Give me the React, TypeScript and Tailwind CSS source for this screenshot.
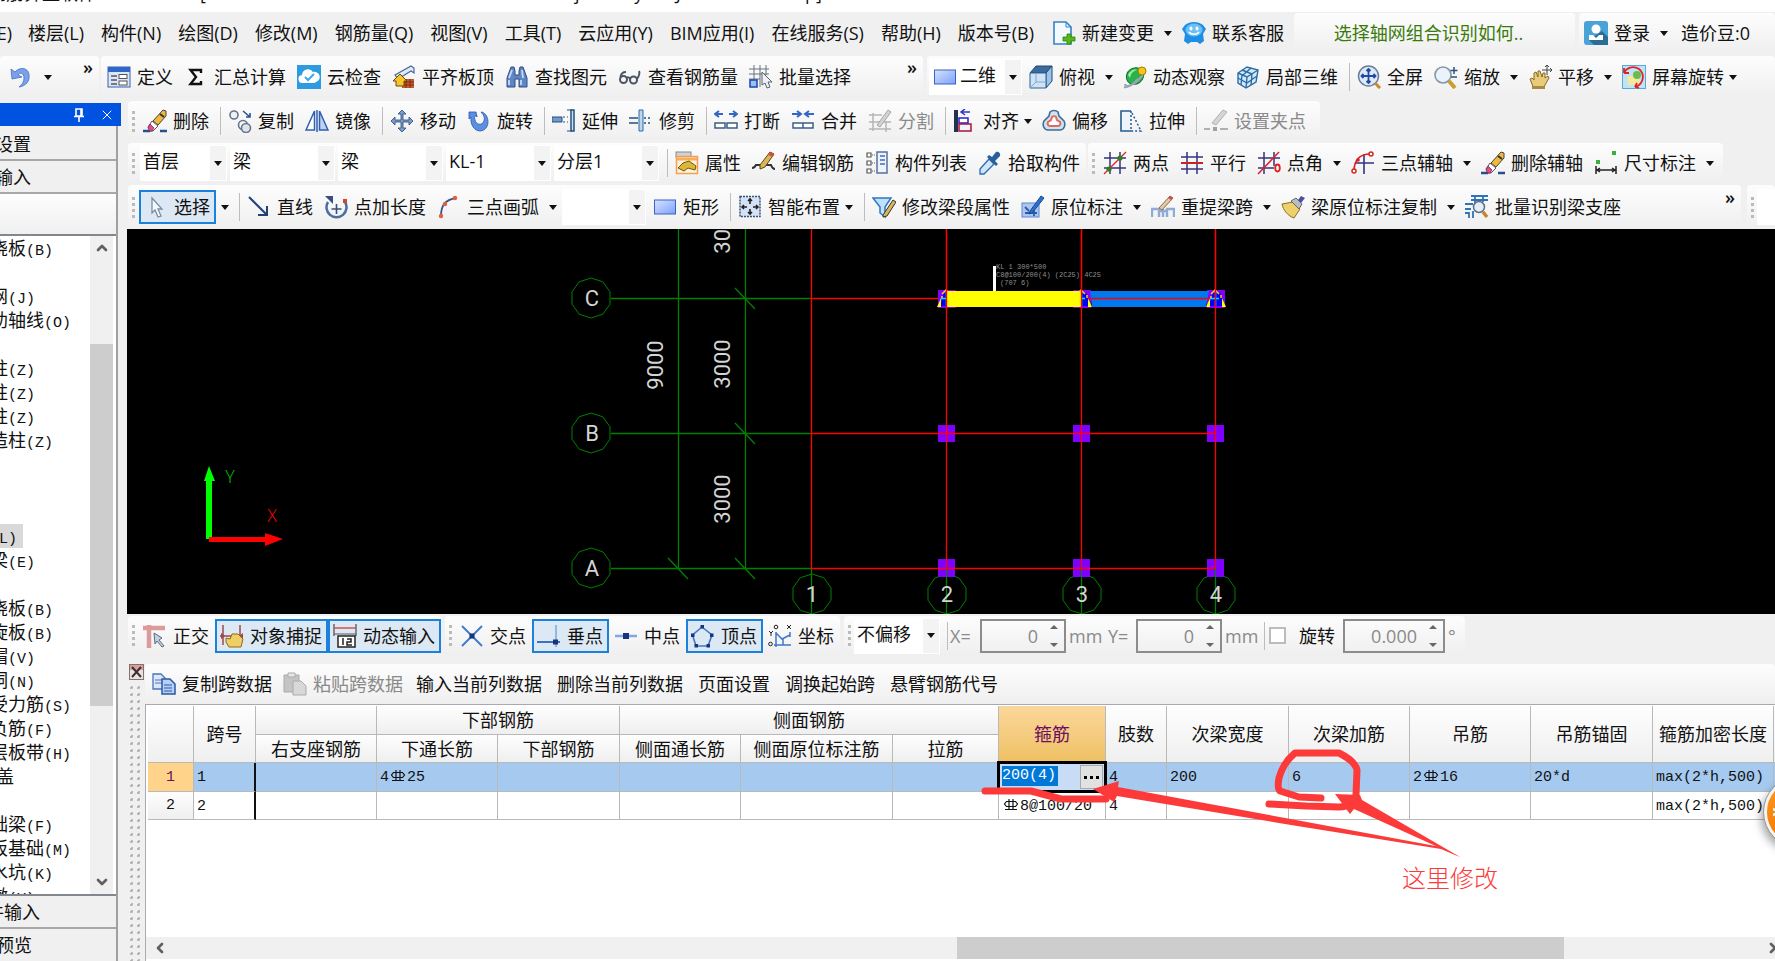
import React from "react";
import { ChevronDown, ChevronLeft, ChevronRight, ChevronUp, X } from "lucide-react";

const icons: Record<string, React.ReactNode> = {
  define: (
    <>
      <rect x="1" y="2" width="22" height="20" fill="#dbe6fa" stroke="#3a62b0" />
      <rect x="1" y="2" width="22" height="5" fill="#2f66c8" />
      <path d="M4 11h6M4 15h6M4 19h6" stroke="#555" strokeWidth="1.5" />
      <rect x="12" y="9.500" width="8" height="4" fill="#fff" stroke="#555" />
      <rect x="12" y="16" width="8" height="4" fill="#fff" stroke="#555" />
    </>
  ),
  sigma: <path d="M17 8V5H6.500L12 12L6.500 19H17V16" fill="none" stroke="#111" strokeWidth="2.400" />,
  cloud: (
    <>
      <rect x="0" y="0" width="24" height="24" fill="#2c9be0" />
      <path d="M6 18a4 4 0 0 1-1-8 6 6 0 0 1 11-3 5 5 0 0 1 3 10c-1 1-2 1-3 1z" fill="#fff" />
      <path d="M8 12l3 3 6-6" fill="none" stroke="#3da8ea" strokeWidth="2" />
    </>
  ),
  slabTop: (
    <>
      <path d="M3 10L19 1l3 2v5l-3-2L6 14z" fill="#dfe9f7" stroke="#44689c" strokeWidth="1.200" />
      <path d="M10 14h12v9H10z" fill="#c65a2e" />
      <path d="M10 17h12M10 20h12M14 14v9M18 14v9" stroke="#7d2c12" />
      <path d="M8 9l7 7h-3v5H4v-5H1z" fill="#f6c52e" stroke="#6b4c00" />
    </>
  ),
  binoculars: (
    <>
      <path d="M6 2h3l1 4v4h4V6l1-4h3l4 11v9h-8v-8h-4v8H2v-9z" fill="#5f86c4" stroke="#2c4c86" />
      <path d="M4 15v5M16 15v5M7 5l-3 8M17 5l1 8" stroke="#c8daf4" strokeWidth="1.800" />
    </>
  ),
  glasses: (
    <g fill="none" stroke="#4b5563" strokeWidth="2">
      <circle cx="5.500" cy="14.500" r="3.500" />
      <circle cx="15.500" cy="15" r="3.500" />
      <path d="M9 13c1-1 2-1 3 1M2.500 12C3 9 5 7 8 7M19 14c2-3 3-6 2-8" />
    </g>
  ),
  batch: (
    <>
      <path d="M0 4h20M0 9h20M0 14h11M5 0v22M11 0v22M17 0v10" stroke="#6b7280" fill="none" />
      <rect x="1" y="15" width="7" height="7" fill="#9bc0f5" stroke="#1746b4" strokeWidth="1.500" />
      <path d="M13 7v13l3-2 2 5 3-1-2-5h4z" fill="#eef1f5" stroke="#5b6470" />
    </>
  ),
  rect: (
    <>
      <defs>
        <linearGradient id="blueBox" x1="0" y1="0" x2="1" y2="1">
          <stop offset="0" stopColor="#d6e4ff" />
          <stop offset="1" stopColor="#7da0fb" />
        </linearGradient>
      </defs>
      <rect x="1.500" y="5" width="21" height="14" fill="url(#blueBox)" stroke="#3a63c0" />
    </>
  ),
  cube: (
    <>
      <path d="M1 8l6-7h16l-6 7z" fill="#3c6a9a" stroke="#1f4a78" />
      <path d="M17 8l6-7v15l-6 7z" fill="#9ec3e4" stroke="#1f4a78" />
      <path d="M1 8h16v15H1z" fill="#cfe3f5" stroke="#2f6299" />
      <path d="M7 8v9h10M7 17l-6 6" stroke="#7da9cf" fill="none" />
    </>
  ),
  orbit: (
    <>
      <ellipse cx="12" cy="11" rx="9" ry="8" fill="#2bb24c" stroke="#10702a" transform="rotate(-35 12 11)" />
      <path d="M5 10c3-6 8-6 9-5-4 1-6 3-7 8z" fill="#9af0a6" />
      <path d="M1 22c3 1 9-2 14-8M2 19c0 4 9 2 18-9" fill="none" stroke="#9aa6b5" strokeWidth="2" />
      <circle cx="19" cy="6" r="4" fill="#f5c518" stroke="#a67c00" />
    </>
  ),
  local3d: (
    <g fill="#d4e8f8" stroke="#2c6ca6" strokeWidth="1.400">
      <path d="M2 8l9-6 11 3-2 12-10 6-8-5z" />
      <path d="M2 8l9 4 11-7M11 12l-1 11M6 5l10 4M6 10l-1 10M16 9l-1 11M7 20M2 13l9 5 10-7M15 3L7 10" fill="none" />
    </g>
  ),
  fullscreen: (
    <>
      <circle cx="11.500" cy="11" r="10" fill="#dfeaf8" stroke="#6b7f9e" strokeWidth="1.500" />
      <path d="M11.500 4v14M4.500 11h14M9.500 6l2-2 2 2M9.500 16l2 2 2-2M6.500 9l-2 2 2 2M16.500 9l2 2-2 2" fill="none" stroke="#2348a0" strokeWidth="1.800" />
      <path d="M18 18l5 5" stroke="#c98a2b" strokeWidth="3" />
    </>
  ),
  zoom: (
    <>
      <circle cx="9" cy="10" r="8" fill="#eaf2fb" stroke="#8896a8" strokeWidth="1.600" />
      <path d="M15 16l6 7" stroke="#c9a02b" strokeWidth="4" />
      <path d="M20 2v7M16.500 5.500h7M17 12h6" stroke="#33507c" strokeWidth="1.500" />
    </>
  ),
  pan: (
    <>
      <path d="M2 14l2-1 2 2V8l2-1 2 5V6l2 0 2 6 1-4 2 0 0 5 3-2 1 2-4 7-2 4H6z" fill="#e9cb7c" stroke="#8a6a1c" />
      <path d="M19 0v10M14 5h10M17 2l2-2 2 2M22 3l2 2-2 2" fill="none" stroke="#444" />
      <path d="M4 21h13v3H4z" fill="#a88a45" />
    </>
  ),
  screenRotate: (
    <>
      <rect x="0.500" y="0.500" width="23" height="23" fill="#bfe3f7" stroke="#59a9d6" />
      <path d="M5 11h10l3 4v5H6z" fill="#f4e7a1" />
      <circle cx="15" cy="10" r="4" fill="#6dbb4a" />
      <path d="M2 8c2-5 9-8 15-4 6 5 5 14-3 18M2 8V3M2 8h5M13 22l4 1M13 22l2-4" fill="none" stroke="#e02424" strokeWidth="1.800" />
    </>
  ),
  erase: (
    <>
      <path d="M0 22h7M17 22h7" stroke="#24508e" strokeWidth="2.500" />
      <path d="M10 12L20 1l3 1v5L15 16z" fill="#f0b93a" stroke="#444" />
      <path d="M17 5l4 3" stroke="#333" strokeWidth="2" />
      <path d="M9 12l6 5-5 5H7l-2-4z" fill="#fff" stroke="#555" />
      <path d="M7 15l4 4-2 3H7l-2-3z" fill="#e34a8c" stroke="#8a2a58" strokeWidth="0.800" />
    </>
  ),
  copy: (
    <>
      <circle cx="6" cy="6" r="4" fill="#eef2f7" stroke="#66758a" strokeWidth="1.600" />
      <circle cx="15" cy="16" r="4.500" fill="none" stroke="#66758a" strokeWidth="1.600" />
      <circle cx="18" cy="19" r="4.500" fill="#dde4ee" stroke="#66758a" strokeWidth="1.600" />
      <path d="M15 2l7 6M22 4v4h-4" fill="none" stroke="#2a5298" strokeWidth="1.600" />
    </>
  ),
  mirror: (
    <g fill="#fff" stroke="#2f5fae" strokeWidth="1.500">
      <path d="M9.500 2v19H1z" />
      <path d="M14.500 2v19H23z" fill="#bcd2f3" />
      <path d="M12 1v22" />
    </g>
  ),
  move: (
    <path d="M12 1l4 4h-3v6h6V8l4 4-4 4v-3h-6v6h3l-4 4-4-4h3v-6H5v3l-4-4 4-4v3h6V5H8z" fill="#7c9cc8" stroke="#24487f" strokeWidth="0.800" />
  ),
  rotate: (
    <path d="M9 3H2v7l2-2c-1 7 3 14 9 14s10-7 7-14c-1-3-4-5-6-5 3 3 4 6 3 9-2 5-8 4-9-1-1-2 0-4 1-5l1 2z" fill="#5d8fe0" stroke="#2a57ad" strokeWidth="0.800" />
  ),
  extend: (
    <>
      <path d="M0 8h10v5H0z" fill="#6f9acb" stroke="#23507f" />
      <path d="M11 8h5M11 13h5" stroke="#23507f" strokeDasharray="2 2" />
      <path d="M19 1h3v21h-3z" fill="#cfe0f2" stroke="#23507f" strokeWidth="1.500" />
      <path d="M15 1h5M15 22h5" stroke="#23507f" />
    </>
  ),
  trim: (
    <>
      <path d="M0 9h9M0 14h9" stroke="#23507f" strokeWidth="1.600" />
      <path d="M15 9h8M15 14h8" stroke="#23507f" strokeDasharray="2 2" strokeWidth="1.600" />
      <path d="M10 1h4v21h-4z" fill="#bcd5ee" stroke="#2e6da6" />
    </>
  ),
  breakLine: (
    <>
      <path d="M9 5H2M5 2L1 5l4 3M15 5h7M19 2l4 3-4 3" fill="none" stroke="#3267c4" strokeWidth="2" />
      <path d="M1 14h10v5H1zM13 14h10v5H13z" fill="#fff" stroke="#3d5d86" strokeWidth="1.500" />
    </>
  ),
  merge: (
    <>
      <path d="M1 5h8M6 2l4 3-4 3M23 5h-8M18 2l-4 3 4 3" fill="none" stroke="#3267c4" strokeWidth="2" />
      <path d="M2 14h20v5H2zM12 14v5" fill="#fff" stroke="#3d5d86" strokeWidth="1.500" />
    </>
  ),
  split: (
    <>
      <path d="M1 6h13M1 20h22M5 4v18M18 12v11M1 13h22" stroke="#b5b5b5" strokeWidth="1.500" fill="none" />
      <path d="M9 16L20 1l3 2L12 18z" fill="#d2d2d2" stroke="#a5a5a5" />
    </>
  ),
  align: (
    <>
      <path d="M3 1v22" stroke="#1f3350" strokeWidth="4" />
      <path d="M17 3H9M12 0L8 3l4 3" fill="none" stroke="#3232c8" strokeWidth="1.500" />
      <path d="M6 9h9v5H6z" fill="#fff" stroke="#2222cc" strokeWidth="1.500" />
      <path d="M6 15h12v7H6z" fill="#f0f4ff" stroke="#b01030" strokeWidth="1.500" />
    </>
  ),
  offset: (
    <>
      <path d="M8 3c2-2 6-2 8 0l1 4 5 5c2 4 0 9-4 9H6c-4 0-6-5-4-9l5-5z" fill="#cfe3f3" stroke="#3d6f97" strokeWidth="1.600" />
      <path d="M10 8c1-1 3-1 4 0l1 3 3 2c1 2 0 4-2 4H8c-2 0-3-2-2-4l3-2z" fill="#fff" stroke="#e06a5e" strokeWidth="2" />
    </>
  ),
  stretch: (
    <>
      <path d="M12 2H2v20h11" fill="#eef4fb" stroke="#2a5a92" strokeWidth="1.600" />
      <path d="M12 2v20M13 4l9 18H13" fill="none" stroke="#2a5a92" strokeDasharray="2 2" strokeWidth="1.500" />
    </>
  ),
  grip: (
    <>
      <path d="M0 20h6M16 20h8" stroke="#b0b0b0" strokeWidth="2" />
      <path d="M9 18h4v4H9z" fill="#a0a0a0" />
      <path d="M8 14L19 1l4 2-11 13z" fill="#d5d5d5" stroke="#b0b0b0" />
    </>
  ),
  property: (
    <>
      <rect x="1" y="1" width="15" height="5" fill="#cfd3d8" stroke="#888" />
      <rect x="1.500" y="5.500" width="21" height="17" fill="#fdf3dd" stroke="#f0a050" strokeWidth="1.500" />
      <path d="M2 8h20" stroke="#f3b060" strokeWidth="3" />
      <path d="M3 17l5-5 6-2 7 5-1 4-7-2-4 3z" fill="#dcb83a" stroke="#71530b" />
    </>
  ),
  editBar: (
    <>
      <path d="M0 17c2 0 3-1 4-3h15c1 3 2 4 4 4" fill="none" stroke="#333" strokeWidth="2" />
      <path d="M8 14L18 1l4 2-9 13-5 2z" fill="#d9b65a" stroke="#5c4712" />
      <path d="M18 1l4 2-1 3-5-2z" fill="#d05050" />
    </>
  ),
  list: (
    <>
      <path d="M2 2h4v4H2zM2 10h4v4H2zM2 18h4v4H2z" fill="#fff" stroke="#555" strokeWidth="1.200" />
      <path d="M7 4h4M7 12h4M7 20h4" stroke="#555" strokeDasharray="1 1" />
      <rect x="12" y="1" width="10" height="21" fill="#eef3fb" stroke="#5470a0" strokeWidth="1.500" />
      <path d="M15 5h5M15 9h5M15 13h5" stroke="#3e6ec0" strokeWidth="1.500" />
    </>
  ),
  dropper: (
    <>
      <path d="M11 8l5 5L6 23H2v-5z" fill="#cfe6fa" stroke="#2a6ab0" strokeWidth="1.300" />
      <path d="M9 6l9 9 2-2-3-3 5-5c1-3-2-5-4-4l-4 5-3-2z" fill="#2a5f9e" />
    </>
  ),
  twoPoint: (
    <>
      <path d="M7 1v22M17 1v22M1 7h22M1 17h22" stroke="#35357c" strokeWidth="1.500" />
      <path d="M1 23L23 1" stroke="#d22" strokeWidth="1.300" />
      <circle cx="17" cy="7" r="2.600" fill="#357a1c" />
      <circle cx="6" cy="18" r="2.600" fill="#357a1c" />
    </>
  ),
  parallel: (
    <>
      <path d="M7 1v22M17 1v22M1 6h22M1 18h22" stroke="#35357c" strokeWidth="1.500" />
      <path d="M1 12h22" stroke="#c22" strokeWidth="2" />
    </>
  ),
  pointAngle: (
    <>
      <path d="M7 1v22M17 1v14M1 7h22M1 17h16" stroke="#35357c" strokeWidth="1.500" />
      <path d="M1 23L22 1" stroke="#d22" strokeWidth="1.500" />
      <ellipse cx="20.500" cy="17" rx="2.300" ry="3.500" fill="none" stroke="#d22" strokeWidth="1.800" />
    </>
  ),
  threePoint: (
    <>
      <path d="M13 3v20M4 12h19" stroke="#35357c" strokeWidth="1.600" />
      <path d="M3 20C3 9 9 3 19 3" fill="none" stroke="#d22" strokeWidth="1.600" />
      <circle cx="3" cy="20" r="2" fill="#fff" stroke="#d22" strokeWidth="1.500" />
      <circle cx="20" cy="3" r="2" fill="#fff" stroke="#d22" strokeWidth="1.500" />
      <circle cx="7" cy="9" r="1.800" fill="#d22" />
    </>
  ),
  dimension: (
    <>
      <path d="M2 15v8M22 15v8M3 19h18M6 17l-3 2 3 2M18 17l3 2-3 2" fill="none" stroke="#222" strokeWidth="1.500" />
      <path d="M2 9h4v4H2zM18 0h4v4h-4z" fill="#3cae3c" />
    </>
  ),
  cursor: <path d="M8 3v15l3-3 3 7 3-1-3-7h4z" fill="#f6f9fd" stroke="#7d8da3" strokeWidth="1.300" />,
  line: <path d="M2 2l18 18M20 11v9h-9" fill="none" stroke="#24407a" strokeWidth="2" />,
  pointLength: (
    <>
      <path d="M4 7a10 10 0 1 0 17 0" fill="none" stroke="#4a6da3" strokeWidth="2.500" />
      <path d="M1 1h8v8z" fill="#34517f" />
      <path d="M12.500 9v10M7.500 14h10" stroke="#34517f" strokeWidth="1.600" />
      <path d="M19 4h4v4h-4z" fill="#d2492a" />
    </>
  ),
  arc: (
    <>
      <path d="M4 21C4 10 8 5 19 3" fill="none" stroke="#35568c" strokeWidth="1.800" />
      <circle cx="4" cy="21" r="2.200" fill="#e2603c" />
      <circle cx="8" cy="9" r="2.200" fill="#e2603c" />
      <circle cx="18" cy="3" r="2.200" fill="#e2603c" />
    </>
  ),
  smart: (
    <>
      <rect x="2" y="1.500" width="20" height="20" fill="#d3e2f4" stroke="#38527a" strokeDasharray="2 1" strokeWidth="1.500" />
      <path d="M12 4v5M10 6l2-2 2 2M12 19v-5M10 17l2 2 2-2M4 12h5M6 10l-2 2 2 2M20 12h-5M18 10l2 2-2 2" fill="none" stroke="#222" strokeWidth="1.600" />
    </>
  ),
  modifySeg: (
    <>
      <path d="M1 3h18l-6 9v10l-5-4v-6z" fill="#bfe0fb" stroke="#2e78c0" strokeWidth="1.500" />
      <path d="M11 20L21 5l3 2-9 14-4 1z" fill="#d9b65a" stroke="#333" />
    </>
  ),
  inSitu: (
    <>
      <rect x="1" y="8" width="17" height="14" fill="#a9c6f4" stroke="#5d88cc" />
      <path d="M4 12l4 4M4 18h12M13 12v9" stroke="#2d5aa8" strokeWidth="1.800" />
      <path d="M9 16L20 1l3 2L12 17l-4 2z" fill="#2f6fd0" stroke="#1b4892" />
    </>
  ),
  respan: (
    <>
      <path d="M1 22v-8h7v8M8 16h8M16 22v-8h7v8M12 14v8" fill="none" stroke="#8fabd6" strokeWidth="2.400" />
      <path d="M8 13L19 1l3 2-11 12z" fill="#e3c9a8" stroke="#8b6c4a" />
      <path d="M19 1l3 2-2 2-3-2z" fill="#c95050" />
    </>
  ),
  brush: (
    <>
      <path d="M1 9l11-2 7 7-6 9C7 21 2 15 1 9z" fill="#ecd06a" stroke="#8a7020" />
      <path d="M10 6l5-3 6 6-3 5z" fill="#b9bcc4" stroke="#666" />
      <path d="M17 5l3-4 4 2-4 5z" fill="#4b4f9e" />
    </>
  ),
  identify: (
    <>
      <path d="M6 1h17M10 1v8M18 1v6M0 9h8M0 14h6M8 16v7M0 18h4v5M6 5h17" stroke="#2f74b8" strokeWidth="1.800" fill="none" />
      <circle cx="14" cy="12" r="5.500" fill="#e3eef8" stroke="#607080" strokeWidth="1.500" />
      <path d="M18 17l4 5" stroke="#c9822b" strokeWidth="3.500" />
    </>
  ),
  ortho: (
    <>
      <path d="M0 4h22M6 1v23" stroke="#dd9a9a" strokeWidth="4.500" />
      <path d="M11 9l8 5-3 2 5 6-2 1-5-6-2 3z" fill="#c6d0df" stroke="#5b6b84" />
    </>
  ),
  snap: (
    <>
      <path d="M3 1v20M20 1v12M0 12h22" stroke="#a04848" strokeWidth="1.500" />
      <path d="M1 9l4 3-4 3zM23 9l-4 3 4 3z" fill="#a04848" />
      <path d="M6 14l4 1 2-5h6l5 5-2 8H9l-3-5z" fill="#efcf63" stroke="#8a6a1c" />
    </>
  ),
  dynInput: (
    <>
      <path d="M1 0v12M23 0v12" stroke="#555" strokeWidth="1.300" />
      <path d="M1 4h22" stroke="#d05050" strokeWidth="1.500" />
      <path d="M1 10h22" stroke="#555" />
      <rect x="5" y="12" width="17" height="11" fill="#fff" stroke="#222" strokeWidth="1.500" />
      <path d="M10 14v7M14 15h4v3h-4v3h5" fill="none" stroke="#222" strokeWidth="1.500" />
    </>
  ),
  cross: (
    <>
      <path d="M2 2l20 20M22 2L2 22" stroke="#3d7dd0" strokeWidth="2" />
      <rect x="9.500" y="9.500" width="5" height="5" fill="#17357c" />
    </>
  ),
  perp: (
    <>
      <path d="M0 18h23" stroke="#2a66b8" strokeWidth="1.800" />
      <path d="M19 1v22" stroke="#93b6e2" strokeWidth="2" />
      <rect x="16" y="15.500" width="5" height="5" fill="#17357c" />
    </>
  ),
  mid: (
    <>
      <path d="M1 12h22" stroke="#7ea9e2" strokeWidth="2.500" />
      <rect x="9" y="9" width="6" height="6" fill="#17357c" />
    </>
  ),
  vertex: (
    <>
      <path d="M11 3L21 11L17 22H5L1.500 11z" fill="none" stroke="#3f78c8" strokeWidth="1.600" />
      <path d="M9.500 1h3.500v3.500H9.500zM19 9.500h3.500V13H19zM15.500 20H19v3.500h-3.500zM3.500 20H7v3.500H3.500zM0 9.500h3.500V13H0z" fill="#17357c" />
    </>
  ),
  coord: (
    <>
      <path d="M8 8v15M6 21h17M8 9l6 6 8-4M15 15v6M22 8v5" fill="none" stroke="#3f78c8" strokeWidth="1.500" />
      <circle cx="8" cy="3" r="1.800" fill="none" stroke="#222" />
      <circle cx="2.500" cy="20" r="1.800" fill="none" stroke="#222" />
      <path d="M19 1l4 4M23 1l-4 4M1 7l2 2 2-2M3 9v3" stroke="#222" fill="none" />
    </>
  ),
  copyDoc: (
    <>
      <path d="M1 2h8l4 4v11H1z" fill="#dbe8fb" stroke="#4a74b8" strokeWidth="1.300" />
      <path d="M3 8h7M3 11h7" stroke="#4a74b8" />
      <path d="M10 7h8l5 5v10H10z" fill="#b7d0f6" stroke="#2c57a8" strokeWidth="1.500" />
      <path d="M12 13h8M12 16h8M12 19h8" stroke="#2c57a8" />
    </>
  ),
  paste: (
    <>
      <path d="M1 3h15v17H1z" fill="#c4c4c4" stroke="#aaa" />
      <path d="M5 1h7v4H5z" fill="#e6e6e6" stroke="#aaa" />
      <path d="M10 9h8l5 5v9H10z" fill="#d8d8d8" stroke="#aaa" />
    </>
  ),
  newDoc: (
    <>
      <path d="M2 1h12l5 5v17H2z" fill="#f3f9ff" stroke="#3583c4" strokeWidth="1.600" />
      <path d="M14 1v5h5" fill="none" stroke="#3583c4" />
      <path d="M15 13h4v3h4v4h-4v3h-4v-3h-4v-4h4z" fill="#54b81d" stroke="#2d8006" strokeWidth="0.800" />
    </>
  ),
  service: (
    <>
      <path d="M0 8l3-4c5-4 13-4 18 0l3 4-3 5 1 7-4 3-3-2h-6l-3 2-4-3 1-7z" fill="#1f8fe6" />
      <ellipse cx="12" cy="9" rx="8.500" ry="6.500" fill="#6cc0f7" />
      <ellipse cx="9" cy="7.500" rx="1.500" ry="2" fill="#fff" />
      <ellipse cx="15" cy="7.500" rx="1.500" ry="2" fill="#fff" />
      <path d="M7 11c2 3 8 3 10 0" fill="none" stroke="#fff" strokeWidth="1.600" />
    </>
  ),
  user: (
    <>
      <rect x="0" y="0" width="24" height="24" rx="3" fill="#4aa3d6" />
      <path d="M18 10l6 6v8H10l-5-5z" fill="#2c6d96" />
      <circle cx="12" cy="8" r="4.500" fill="#fff" />
      <path d="M5 19v-5h4l3 3 3-3h4v5z" fill="#fff" />
    </>
  ),
  undo: (
    <path d="M2 4l1 10 10-2-4-2c2-3 6-2 6 3 0 4-2 7-5 9 7-1 11-6 10-12C20 3 11 1 6 7z" fill="#7aa0ea" stroke="#4170cc" strokeWidth="0.800" />
  ),
};

type ToolProps = {
  icon?: string;
  label: string;
  caret?: "wide" | "tight";
  active?: boolean;
  muted?: boolean;
};

const Icon = ({ name }: { name: string }) => (
  <svg viewBox="0 0 24 24" className="size-6 shrink-0" aria-hidden="true">
    {icons[name]}
  </svg>
);

const Caret = () => (
  <svg viewBox="0 0 8 5" className="h-[5px] w-2 shrink-0" aria-hidden="true">
    <path d="M0 0h8L4 5z" fill="#111" />
  </svg>
);

const Tool = ({ icon, label, caret, active, muted }: ToolProps) => (
  <>
    <button
      type="button"
      disabled={muted}
      className={`flex h-[34px] shrink-0 items-center gap-1.5 whitespace-nowrap pl-[5px] ${caret ? "pr-0" : "pr-[6px]"} ${
        active ? "bg-[#dce9f5] outline-2 -outline-offset-2 outline-[#1a82dc]" : ""
      } ${muted ? "text-[#8a8a8a]" : "text-[#111]"}`}
    >
      {icon && <Icon name={icon} />}
      {label}
    </button>
    {caret && (
      <button
        type="button"
        aria-label={`${label} 更多`}
        className={`flex h-[34px] shrink-0 items-center justify-center ${caret === "wide" ? "w-[23px] pl-1" : "w-[18px]"}`}
      >
        <Caret />
      </button>
    )}
  </>
);

const Sep = () => <span className="mr-[2px] ml-[5px] h-7 w-px shrink-0 bg-[#bdbdbd]" />;

const Grip = () => (
  <span className="flex w-2.5 shrink-0 flex-col items-end gap-[3px] pr-[3px]">
    <i className="size-[3px] bg-[#bbb]" />
    <i className="size-[3px] bg-[#bbb]" />
    <i className="size-[3px] bg-[#bbb]" />
    <i className="size-[3px] bg-[#bbb]" />
  </span>
);

const Band = ({ className = "", children }: { className?: string; children: React.ReactNode }) => (
  <div className={`flex items-center rounded-sm bg-linear-to-b from-[#fdfdfd] to-[#efefef] ${className}`}>{children}</div>
);

const Combo = ({ label, value, className, icon }: { label: string; value: string; className: string; icon?: string }) => (
  <div className={`relative flex h-9 shrink-0 items-center bg-white ${className}`}>
    {icon && (
      <span className="pl-1">
        <Icon name={icon} />
      </span>
    )}
    <select aria-label={label} className="h-full w-full min-w-0 appearance-none bg-transparent pb-1 pl-[3px] text-[#111]">
      <option>{value}</option>
    </select>
    <span className="pointer-events-none absolute inset-y-px right-px flex w-4 items-center justify-center bg-[#f3f3f3]">
      <Caret />
    </span>
  </div>
);

const More = () => <span className="mb-5 text-lg leading-none font-semibold">»</span>;

const menus = [
  "楼层(L)", "构件(N)", "绘图(D)", "修改(M)", "钢筋量(Q)", "视图(V)", "工具(T)",
  "云应用(Y)", "BIM应用(I)", "在线服务(S)", "帮助(H)", "版本号(B)",
];

const TitleBar = () => (
  <div className="flex h-3 shrink-0 items-end overflow-hidden bg-white whitespace-nowrap">
    <span className="-ml-[66px] block pb-[7px]">广联达钢筋算量软件</span>
    <span className="ml-[104px] block pb-[7px]">[C:\Users\Admins\Documents\GrandSoft Projects My\GGJ\12.0\Work Tmp]</span>
  </div>
);

const MenuBar = () => (
  <div className="flex h-[42px] shrink-0 items-center overflow-hidden whitespace-nowrap">
    <button type="button" className="flex w-5 shrink-0 justify-end overflow-hidden pr-2">
      编辑(E)
    </button>
    <div className="flex shrink-0 gap-px pr-[5px]">
      {menus.map((m) => (
        <button key={m} type="button" className="px-2">
          {m}
        </button>
      ))}
    </div>
    <Tool icon="newDoc" label="新建变更" caret="wide" />
    <Tool icon="service" label="联系客服" />
    <Band className="mr-1 ml-1 h-10 w-[281px] shrink-0 justify-center">
      <a href="#tip" className="pr-3 text-[#3b7a0c]">
        选择轴网组合识别如何..
      </a>
    </Band>
    <Band className="h-10 flex-1">
      <Tool icon="user" label="登录" caret="wide" />
      <span className="pl-2">造价豆:0</span>
    </Band>
  </div>
);

const MainToolbar = () => (
  <div className="flex h-[47px] shrink-0 items-start overflow-hidden pt-0.5">
    <Band className="mr-0.5 h-[42px] w-[99px] shrink-0 justify-between pr-1.5 pl-[9px]">
      <button type="button" aria-label="撤销" className="flex items-center gap-[11px]">
        <Icon name="undo" />
        <Caret />
      </button>
      <More />
    </Band>
    <Band className="mr-1 h-[42px] w-[822px] shrink-0 pl-px">
      <Tool icon="define" label="定义" />
      <Tool icon="sigma" label="汇总计算" />
      <Tool icon="cloud" label="云检查" />
      <Tool icon="slabTop" label="平齐板顶" />
      <Tool icon="binoculars" label="查找图元" />
      <Tool icon="glasses" label="查看钢筋量" />
      <Tool icon="batch" label="批量选择" />
      <span className="ml-auto flex pr-1.5">
        <More />
      </span>
    </Band>
    <Band className="h-[42px] flex-1 pl-0.5">
      <Combo label="视图模式" value="二维" icon="rect" className="mr-[2px] w-[93px]" />
      <Tool icon="cube" label="俯视" caret="wide" />
      <Tool icon="orbit" label="动态观察" />
      <Tool icon="local3d" label="局部三维" />
      <Sep />
      <Tool icon="fullscreen" label="全屏" />
      <Tool icon="zoom" label="缩放" caret="wide" />
      <Tool icon="pan" label="平移" caret="wide" />
      <Tool icon="screenRotate" label="屏幕旋转" caret="tight" />
    </Band>
  </div>
);

const EditToolbars = () => (
  <div className="flex shrink-0 flex-col items-start gap-[2px] overflow-hidden pl-px">
    <Band className="h-10 pr-2">
      <Grip />
      <Tool icon="erase" label="删除" />
      <Sep />
      <Tool icon="copy" label="复制" />
      <Tool icon="mirror" label="镜像" />
      <Sep />
      <Tool icon="move" label="移动" />
      <Tool icon="rotate" label="旋转" />
      <Sep />
      <Tool icon="extend" label="延伸" />
      <Tool icon="trim" label="修剪" />
      <Sep />
      <Tool icon="breakLine" label="打断" />
      <Tool icon="merge" label="合并" />
      <Tool icon="split" label="分割" muted />
      <Sep />
      <Tool icon="align" label="对齐" caret="tight" />
      <Tool icon="offset" label="偏移" />
      <Tool icon="stretch" label="拉伸" />
      <Sep />
      <Tool icon="grip" label="设置夹点" muted />
    </Band>
    <div className="flex gap-0.5">
      <Band className="h-10">
        <Grip />
        <div className="mr-[3px] ml-0.5 flex gap-[3px]">
          <Combo label="楼层" value="首层" className="w-[87px]" />
          <Combo label="构件类型" value="梁" className="w-[105px]" />
          <Combo label="构件" value="梁" className="w-[105px]" />
          <Combo label="构件名称" value="KL-1" className="w-[105px]" />
          <Combo label="分层" value="分层1" className="w-[105px]" />
        </div>
        <Sep />
        <Tool icon="property" label="属性" />
        <Tool icon="editBar" label="编辑钢筋" />
        <Tool icon="list" label="构件列表" />
        <Tool icon="dropper" label="拾取构件" />
      </Band>
      <Band className="h-10 pr-1">
        <Grip />
        <Tool icon="twoPoint" label="两点" />
        <Tool icon="parallel" label="平行" />
        <Tool icon="pointAngle" label="点角" caret="wide" />
        <Tool icon="threePoint" label="三点辅轴" caret="wide" />
        <Tool icon="erase" label="删除辅轴" />
        <Tool icon="dimension" label="尺寸标注" caret="wide" />
      </Band>
    </div>
    <div className="flex w-full gap-1.5">
      <Band className="h-11 w-[1613px] shrink-0">
        <Grip />
        <span className="w-px" />
        <Tool icon="cursor" label="选择" active />
        <button type="button" aria-label="选择 更多" className="flex h-8 w-[18px] shrink-0 items-center justify-center">
          <Caret />
        </button>
        <Sep />
        <Tool icon="line" label="直线" />
        <Tool icon="pointLength" label="点加长度" />
        <Tool icon="arc" label="三点画弧" caret="wide" />
        <Combo label="画弧方式" value="" className="mr-0.5 w-[84px]" />
        <Tool icon="rect" label="矩形" />
        <Sep />
        <Tool icon="smart" label="智能布置" caret="tight" />
        <span className="w-px" />
        <Sep />
        <Tool icon="modifySeg" label="修改梁段属性" />
        <Tool icon="inSitu" label="原位标注" caret="wide" />
        <Tool icon="respan" label="重提梁跨" caret="wide" />
        <Tool icon="brush" label="梁原位标注复制" caret="wide" />
        <Tool icon="identify" label="批量识别梁支座" />
        <span className="ml-auto flex pr-1.5">
          <More />
        </span>
      </Band>
      <Band className="h-11 flex-1">
        <Grip />
        <span className="h-9 flex-1 bg-white" />
      </Band>
    </div>
  </div>
);

const treeRows = [
  "现浇板(B)", "", "轴网(J)", "辅助轴线(O)", "", "框柱(Z)", "暗柱(Z)", "端柱(Z)", "构造柱(Z)",
  "", "", "", "梁(L)", "圈梁(E)", "", "现浇板(B)", "螺旋板(B)", "柱帽(V)", "板洞(N)",
  "板受力筋(S)", "板负筋(F)", "楼层板带(H)", "空心楼盖", "", "基础梁(F)", "筏板基础(M)", "集水坑(K)", "柱墩(Y)",
];

// Latin parts are set in the half-width face, Chinese parts keep the full size
const Mixed = ({ text }: { text: string }) => (
  <>
    {text.split(/([\x20-\x7e]+)/).map((part, i) =>
      /^[\x20-\x7e]+$/.test(part) ? (
        <span key={i} className="font-['Liberation_Mono',monospace] text-[15px]">
          {part}
        </span>
      ) : (
        part
      )
    )}
  </>
);

const sideButton = "flex h-[33px] w-full shrink-0 items-center border-b-2 border-[#a8a8a8] bg-[#f0f0f0] overflow-hidden whitespace-nowrap";

const Sidebar = () => (
  <aside className="mr-1.5 flex w-[121px] shrink-0 flex-col overflow-hidden pt-0.5">
    <div className="flex h-[23px] shrink-0 items-center justify-end gap-3.5 bg-[#0053e1] pr-1.5 text-white">
      <svg viewBox="0 0 12 14" className="h-3.5 w-3" aria-label="固定" role="img">
        <path d="M3 1h6v7H3zM8 1v7M1 8.500h10M6 9v5" fill="none" stroke="#fff" strokeWidth="1.600" />
      </svg>
      <X className="size-4" strokeWidth={1.5} />
    </div>
    <div className="mr-[3px] flex min-h-0 flex-1 flex-col border-r-2 border-[#a0a0a0] pt-0.5">
      <button type="button" className={sideButton}>
        <span className="-ml-[41px]">工程设置</span>
      </button>
      <button type="button" className={sideButton}>
        <span className="-ml-[41px]">绘图输入</span>
      </button>
      <div className="h-[42px] shrink-0 border-b-2 border-[#82878f] bg-linear-to-b from-[#fdfdfd] to-[#f0f0f0]" />
      <div className="flex min-h-0 flex-1 border-b-2 border-[#82878f] bg-white pr-[3px]">
        <ul className="min-w-0 flex-1 overflow-hidden whitespace-nowrap">
          {treeRows.map((row, i) => (
            <li key={i} className="flex h-6 items-center">
              <span
                className={`block h-6 leading-6 ${row === "空心楼盖" ? "-ml-[58px]" : "-ml-7"} ${
                  row === "梁(L)" ? "bg-[#d9d9d9] pr-1.5" : ""
                }`}
              >
                <Mixed text={row} />
              </span>
            </li>
          ))}
        </ul>
        <div className="flex w-[23px] shrink-0 flex-col items-center bg-[#f0f0f0]">
          <ChevronUp className="my-1 size-4 shrink-0 text-[#606060]" strokeWidth={4} />
          <span className="mt-[84px] h-[362px] w-full bg-[#cdcdcd]" />
          <ChevronDown className="mt-auto mb-1 size-4 shrink-0 text-[#606060]" strokeWidth={4} />
        </div>
      </div>
      <button type="button" className={sideButton}>
        <span className="-ml-[50px]">单构件输入</span>
      </button>
      <button type="button" className="flex h-8 shrink-0 items-center overflow-hidden bg-[#f0f0f0] whitespace-nowrap">
        <span className="-ml-10">报表预览</span>
      </button>
    </div>
  </aside>
);

const axisX = [811, 946, 1081, 1215];
const axisRows = [
  { y: 298, name: "C" },
  { y: 433, name: "B" },
  { y: 568, name: "A" },
];

const bubble = (cx: number, cy: number) =>
  Array.from({ length: 10 }, (_, i) => {
    const a = ((i + 0.5) * Math.PI) / 5;
    return `${(cx + 20 * Math.cos(a)).toFixed(1)},${(cy + 20 * Math.sin(a)).toFixed(1)}`;
  }).join(" ");

const Support = ({ x }: { x: number }) => (
  <g>
    <rect x={x - 8} y={290} width="18" height="18" fill="#8000ff" />
    <path d={`M${x - 6} 306l4-13h7l5 13z`} fill="#0000f0" />
    <path d={`M${x - 9} 307l4-9v9zM${x + 11} 307l-4-9v9z`} fill="#ff0" />
    <path d={`M${x - 4} 294l4-4 4 4M${x - 4} 296v2M${x + 6} 295v3`} fill="none" stroke="#fc0" strokeWidth="1.500" />
    <path d={`M${x + 0.5} 292v14M${x - 5} 298.500h9`} stroke="#00e5ff" strokeWidth="1.500" />
  </g>
);

const Drawing = () => (
  <div className="h-[385px] shrink-0 overflow-hidden bg-black">
    <svg viewBox="127 229 1300 385" className="h-[385px] w-[1300px]" role="img" aria-label="梁平面图">
      <g stroke="#008000" fill="none" strokeWidth="1.300">
        <path d="M678.500 229V568M745.500 229V568" />
        {axisRows.map(({ y }) => (
          <g key={y}>
            <path d={`M611 ${y + 0.5}H812M735 ${y - 10}l20 21`} />
            <polygon points={bubble(591, y)} strokeWidth="1" />
          </g>
        ))}
        <path d="M668 558l20 21" />
        {axisX.map((x) => (
          <g key={x}>
            <path d={`M${x + 0.5} 568V614`} />
            <polygon points={bubble(x + 1, 594)} strokeWidth="1" />
          </g>
        ))}
      </g>

      {axisX.slice(1).map((x) => (
        <g key={x} fill="#8000ff">
          <rect x={x - 8} y="425" width="17" height="17" />
          <rect x={x - 8} y="559" width="17" height="18" />
        </g>
      ))}
      <path d="M946.500 568V580M1081.500 568V580M1215.500 568V580" stroke="#008000" />

      <g stroke="#f00" strokeWidth="1.300">
        {axisX.map((x) => (
          <path key={x} d={`M${x + 0.5} 229V568`} />
        ))}
        {axisRows.map(({ y }) => (
          <path key={y} d={`M811 ${y + 0.5}H1215`} />
        ))}
      </g>

      {axisX.slice(1).map((x) => (
        <Support key={x} x={x} />
      ))}
      <rect x="947" y="291" width="134" height="16" fill="#ff0" />
      <path d="M1090 291H1209L1206 307H1092z" fill="#0078f0" />
      <path d="M1088 298.500H1210M946.500 229V310M1081.500 229V310M1215.500 229V310" stroke="#f00" strokeWidth="1.300" />
      <rect x="993" y="266" width="3" height="25" fill="#fff" />

      <g fill="#8f8f8f" className="font-['Liberation_Mono',monospace] text-[7px]">
        <text x="996" y="269">KL 1 300*500</text>
        <text x="996" y="277">C8@100/200(4) (2C25) 4C25</text>
        <text x="1000" y="285">(707 6)</text>
      </g>

      <g fill="#d4d4d4" textAnchor="middle" className="font-[Roboto,sans-serif] text-[22px]">
        <text transform="translate(663 365) rotate(-90)">9000</text>
        <text transform="translate(730 229) rotate(-90)">3000</text>
        <text transform="translate(730 364) rotate(-90)">3000</text>
        <text transform="translate(730 499) rotate(-90)">3000</text>
        {axisRows.map(({ y, name }) => (
          <text key={name} x="592" y={y + 8}>
            {name}
          </text>
        ))}
        {axisX.map((x, i) => (
          <text key={x} x={x + 1} y="602">
            {i + 1}
          </text>
        ))}
      </g>

      <path d="M206 539V481h-2l5-15 6 15h-3v58z" fill="#0f0" />
      <path d="M209 537h56v-4l18 6-18 7v-4h-56z" fill="#f00" />
      <g textAnchor="middle" className="text-[18px] font-light">
        <text x="230" y="483" fill="#0c0">Y</text>
        <text x="272" y="522" fill="#f00">X</text>
      </g>
    </svg>
  </div>
);

const Spin = ({ label, value, className }: { label: string; value: string; className: string }) => (
  <span className={`relative flex h-[34px] shrink-0 border-2 border-[#8c8c8c] ${className}`}>
    <input aria-label={label} defaultValue={value} className="w-full min-w-0 bg-transparent pr-[26px] text-right text-[#8a8a8a] outline-none" />
    <svg viewBox="0 0 8 24" className="absolute top-[3px] right-[6px] h-6 w-2" aria-hidden="true">
      <path d="M0 5h8L4 1zM0 19h8l-4 4z" fill="#666" />
    </svg>
  </span>
);

const StatusBar = () => (
  <div className="flex h-[50px] shrink-0 items-start gap-1 overflow-hidden pt-0.5 pl-px">
    <Band className="h-[39px] shrink-0">
      <Grip />
      <Tool icon="ortho" label="正交" />
      <Tool icon="snap" label="对象捕捉" active />
      <Tool icon="dynInput" label="动态输入" active />
    </Band>
    <Band className="h-[39px] shrink-0">
      <Grip />
      <Tool icon="cross" label="交点" />
      <Tool icon="perp" label="垂点" active />
      <Tool icon="mid" label="中点" />
      <Tool icon="vertex" label="顶点" active />
      <Tool icon="coord" label="坐标" />
    </Band>
    <Band className="h-[39px] shrink-0 whitespace-nowrap text-[#8a8a8a]">
      <Grip />
      <Combo label="偏移方式" value="不偏移" className="mr-0.5 w-[86px]" />
      <Sep />
      <span className="w-[30px]">X=</span>
      <Spin label="X" value="0" className="w-[86px]" />
      <span className="w-[42px] pl-[3px]">mm</span>
      <span className="w-7">Y=</span>
      <Spin label="Y" value="0" className="w-[86px]" />
      <span className="w-[37px] pl-[3px]">mm</span>
      <Sep />
      <label className="flex items-center gap-[13px] pr-2 pl-0.5 text-[#111]">
        <input type="checkbox" className="size-[17px] appearance-none border-2 border-[#bcbcbc] bg-white" />
        旋转
      </label>
      <Spin label="旋转角度" value="0.000" className="w-[102px]" />
      <span className="w-5 pl-[3px]">°</span>
    </Band>
  </div>
);

const Bar = () => (
  <svg viewBox="0 0 18 14" className="inline-block h-3.5 w-[18px] align-[-2px]" role="img" aria-label="三级钢">
    <path d="M4.500 3.500H13.500L15.500 6L13.500 8.500H4.500L2.500 6ZM7 1V12M11 1V12M3 11.500H15" fill="none" stroke="#111" strokeWidth="1.200" />
  </svg>
);

const head = "border-r border-b border-[#b9b9b9] bg-linear-to-b from-[#fefefe] to-[#efefef] p-0 font-normal whitespace-nowrap";
const cell = "border-r border-b border-[#b9b9b9] p-0 pt-0.5 pl-[3px] whitespace-nowrap";
const thick = "border-r-2 border-r-[#111]";

const SpanTable = () => (
  <table className="w-[1748px] table-fixed border-separate border-spacing-0 text-[#111]">
    <colgroup>
      <col className="w-[46px]" />
      <col className="w-[62px]" />
      <col className="w-[121px]" />
      <col className="w-[121px]" />
      <col className="w-[122px]" />
      <col className="w-[121px]" />
      <col className="w-[152px]" />
      <col className="w-[106px]" />
      <col className="w-[107px]" />
      <col className="w-[61px]" />
      <col className="w-[122px]" />
      <col className="w-[121px]" />
      <col className="w-[121px]" />
      <col className="w-[122px]" />
      <col className="w-[121px]" />
      <col className="w-[122px]" />
    </colgroup>
    <thead>
      <tr className="h-[29px]">
        <th rowSpan={2} className={head} aria-label="行号" />
        <th rowSpan={2} className={head}>跨号</th>
        <th className={head} />
        <th colSpan={2} className={head}>下部钢筋</th>
        <th colSpan={3} className={head}>侧面钢筋</th>
        <th rowSpan={2} className="border-r border-b border-[#b9b9b9] bg-linear-to-b from-[#fbd79b] to-[#efc062] p-0 font-normal text-[#6b0f5e]">
          箍筋
        </th>
        <th rowSpan={2} className={head}>肢数</th>
        <th rowSpan={2} className={head}>次梁宽度</th>
        <th rowSpan={2} className={head}>次梁加筋</th>
        <th rowSpan={2} className={head}>吊筋</th>
        <th rowSpan={2} className={head}>吊筋锚固</th>
        <th rowSpan={2} className={head}>箍筋加密长度</th>
        <th rowSpan={2} className={head} />
      </tr>
      <tr className="h-7">
        <th className={head}>右支座钢筋</th>
        <th className={head}>下通长筋</th>
        <th className={head}>下部钢筋</th>
        <th className={head}>侧面通长筋</th>
        <th className={head}>侧面原位标注筋</th>
        <th className={head}>拉筋</th>
      </tr>
    </thead>
    <tbody className="font-['Liberation_Mono',monospace] text-[15px]">
      <tr className="h-[29px] bg-[#a6c9ef]">
        <th className="border-r border-b border-[#b9b9b9] bg-[#ffd48a] p-0 pt-0.5 font-normal text-[#6b0f5e]">1</th>
        <td className={`${cell} ${thick}`}>1</td>
        <td className={cell} />
        <td className={cell}>4<Bar />25</td>
        <td className={cell} />
        <td className={cell} />
        <td className={cell} />
        <td className={cell} />
        <td className="relative border-r border-b border-[#b9b9b9] p-0">
          <div className="absolute -top-0.5 -left-0.5 z-10 flex h-8 w-[110px] items-center justify-between border-[3px] border-black bg-[#c9dcf5] pr-px pl-0.5">
            <input aria-label="箍筋" defaultValue="200(4)" className="mb-0.5 h-5 w-14 bg-[#0078d7] text-white outline-none" />
            <button type="button" aria-label="选择箍筋" className="flex h-6 w-[23px] items-center justify-center gap-[3px] border border-[#aaa] bg-[#e1e1e1]">
              <i className="size-[3px] bg-black" />
              <i className="size-[3px] bg-black" />
              <i className="size-[3px] bg-black" />
            </button>
          </div>
        </td>
        <td className={cell}>4</td>
        <td className={cell}>200</td>
        <td className={cell}>6</td>
        <td className={cell}>2<Bar />16</td>
        <td className={cell}>20*d</td>
        <td className={cell}>max(2*h,500)</td>
        <td className={cell} />
      </tr>
      <tr className="h-7">
        <th className={head}>2</th>
        <td className={`${cell} ${thick}`}>2</td>
        <td className={cell} />
        <td className={cell} />
        <td className={cell} />
        <td className={cell} />
        <td className={cell} />
        <td className={cell} />
        <td className={cell}><Bar />8@100/20</td>
        <td className={cell}>4</td>
        <td className={cell} />
        <td className={cell} />
        <td className={cell} />
        <td className={cell} />
        <td className={cell}>max(2*h,500)</td>
        <td className={cell} />
      </tr>
    </tbody>
  </table>
);

const Annotations = () => (
  <svg viewBox="145 705 1630 256" className="pointer-events-none absolute top-0 left-0 z-20 h-64 w-[1630px]" role="img" aria-label="这里修改">
    <g fill="none" stroke="#fd3a3a" strokeWidth="7" strokeLinecap="round" strokeLinejoin="round">
      <path d="M984 791L1030 791L1060 799L1105 799" />
      <path d="M1320 798L1298 797L1279 791Q1276 788 1278 778Q1282 763 1294 753L1338 753Q1354 761 1356 770L1355 795Q1352 807 1338 807L1305 806L1268 804" />
    </g>
    <g fill="#fd3a3a">
      <path d="M1092 789L1118 781L1117 787L1295 820L1440 847L1459 857L1440 849L1290 825L1116 796L1113 802z" />
      <path d="M1334 794L1359 795L1361 800L1459 857L1353 809L1349 814z" />
      <text x="1401" y="887" className="text-[24px] font-light">
        这里修改
      </text>
    </g>
  </svg>
);

const SpanPanel = () => (
  <section className="flex min-h-0 flex-1">
    <div className="flex w-[18px] shrink-0 flex-col pl-[2px]">
      <button type="button" aria-label="关闭" className="h-4 w-[15px] shrink-0 border border-[#777] bg-[#f2dede]">
        <svg viewBox="0 0 13 14" className="h-3.5 w-[13px]">
          <path d="M0 0h13v5H0z" fill="#e39a9a" />
          <path d="M2 2l9 10M11 2L2 12" stroke="#333" strokeWidth="2" />
        </svg>
      </button>
      <svg className="mt-1 min-h-0 w-full flex-1" aria-hidden="true">
        <defs>
          <pattern id="knurl" width="7" height="7" patternUnits="userSpaceOnUse">
            <path d="M1 4h2V2" fill="none" stroke="#a9a9a9" strokeWidth="1.500" />
          </pattern>
        </defs>
        <rect width="14" height="100%" fill="url(#knurl)" />
      </svg>
    </div>
    <div className="flex min-w-0 flex-1 flex-col">
      <Band className="h-10 shrink-0 pl-0.5">
        <Tool icon="copyDoc" label="复制跨数据" />
        <Tool icon="paste" label="粘贴跨数据" muted />
        <div className="flex gap-[15px] pl-[7px] whitespace-nowrap">
          <button type="button">输入当前列数据</button>
          <button type="button">删除当前列数据</button>
          <button type="button">页面设置</button>
          <button type="button">调换起始跨</button>
          <button type="button">悬臂钢筋代号</button>
        </div>
      </Band>
      <div className="relative flex min-h-0 flex-1 flex-col overflow-hidden border-t border-l border-[#a9a9b4] bg-white">
        <div className="min-h-0 flex-1 overflow-hidden pt-px pl-0.5">
          <SpanTable />
        </div>
        <div className="mb-0.5 flex h-[22px] shrink-0 items-center bg-[#f0f0f0] pl-1.5 text-[#606060]">
          <ChevronLeft className="size-4" strokeWidth={4} />
          <span className="ml-auto h-full w-[607px] bg-[#cdcdcd]" />
          <span className="flex w-[211px] justify-end">
            <ChevronRight className="-mr-1.5 size-4" strokeWidth={4} />
          </span>
        </div>
        <Annotations />
        <button
          type="button"
          aria-label="助手"
          className="absolute top-[72px] -right-[59px] z-20 flex size-[70px] items-center rounded-full border-[3px] border-[#f4f4f4] bg-linear-to-b from-[#ff9a1f] to-[#f07800] shadow-[-3px_5px_8px_rgba(0,0,0,0.35)] outline-1 outline-[#999]"
        >
          <svg viewBox="0 0 12 14" className="ml-1.5 h-3.5 w-3" aria-hidden="true">
            <path d="M5 0v14M0 4l5 2M0 10l5-2" stroke="#fff" strokeWidth="2.500" />
          </svg>
        </button>
      </div>
    </div>
  </section>
);

const App = () => {
  return (
    <div className="flex h-screen flex-col overflow-hidden bg-[#f0f0f0] font-['Open_Sans','Noto_Sans_CJK_SC',sans-serif] text-[18px] leading-6 text-[#111]">
      <TitleBar />
      <MenuBar />
      <MainToolbar />
      <div className="flex min-h-0 flex-1">
        <Sidebar />
        <main className="flex min-w-0 flex-1 flex-col">
          <EditToolbars />
          <Drawing />
          <StatusBar />
          <SpanPanel />
        </main>
      </div>
    </div>
  );
};

export default App;
